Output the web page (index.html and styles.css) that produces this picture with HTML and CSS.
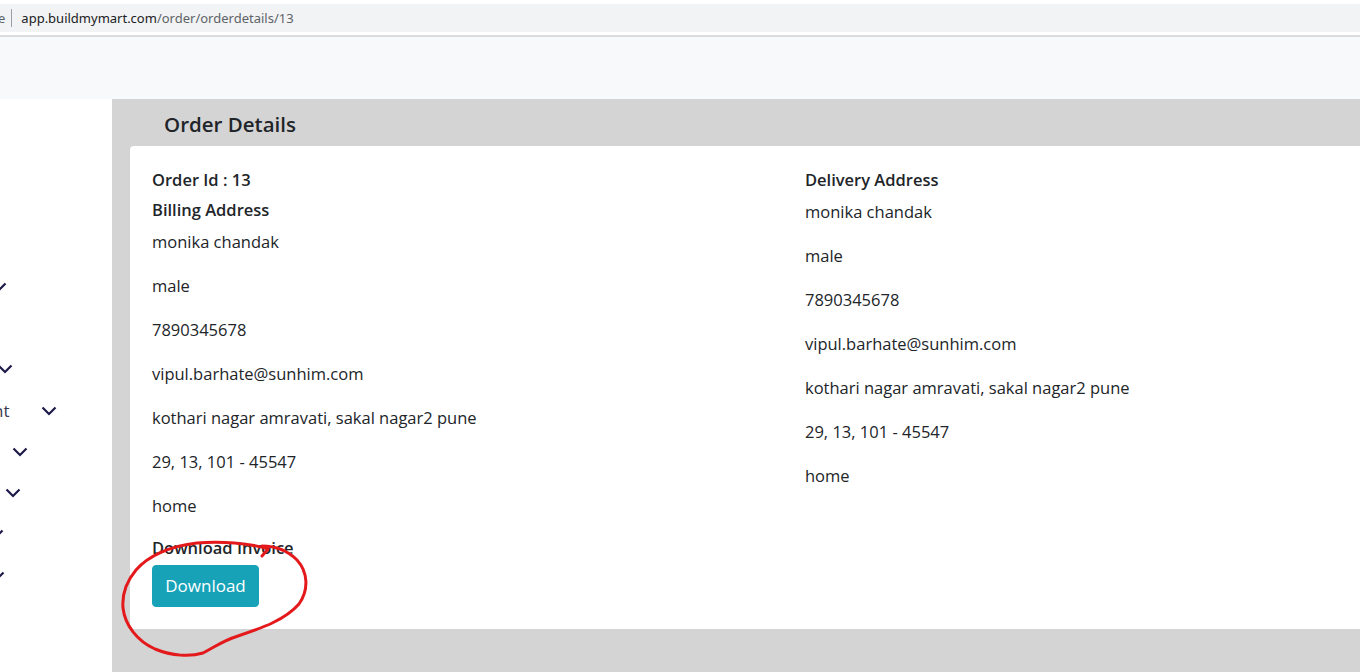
FILE: index.html
```html
<!DOCTYPE html>
<html lang="en">
<head>
    <meta charset="UTF-8">
    <meta name="viewport" content="width=device-width, initial-scale=1.0">
    <title>Order Details - BuildMyMart</title>
    <link rel="stylesheet" href="styles.css">
</head>

<body>
    <div class="browser-bar">
        <div class="url-box">
            <span class="url-tail">e</span>
            <span class="url-sep"></span>
            <span class="url-host">app.buildmymart.com</span><span class="url-path">/order/orderdetails/13</span>
        </div>
    </div>

    <nav class="topnav"></nav>

    <div class="layout">
        <aside class="sidebar">
            <ul class="side-menu">
                <li class="side-item"><svg class="caret c1" viewBox="0 0 16 10"><path d="M1.5 1.5 8 8l6.5-6.5"/></svg></li>
                <li class="side-item"></li>
                <li class="side-item"><svg class="caret c2" viewBox="0 0 16 10"><path d="M1.5 1.5 8 8l6.5-6.5"/></svg></li>
                <li class="side-item"><span class="side-label">nt</span><svg class="caret c3" viewBox="0 0 16 10"><path d="M1.5 1.5 8 8l6.5-6.5"/></svg></li>
                <li class="side-item"><svg class="caret c4" viewBox="0 0 16 10"><path d="M1.5 1.5 8 8l6.5-6.5"/></svg></li>
                <li class="side-item"><svg class="caret c5" viewBox="0 0 16 10"><path d="M1.5 1.5 8 8l6.5-6.5"/></svg></li>
                <li class="side-item"><svg class="caret c6" viewBox="0 0 16 10"><path d="M1.5 1.5 8 8l6.5-6.5"/></svg></li>
                <li class="side-item"><svg class="caret c7" viewBox="0 0 16 10"><path d="M1.5 1.5 8 8l6.5-6.5"/></svg></li>
            </ul>
        </aside>

        <main class="content">
            <h2 class="page-title">Order Details</h2>

            <div class="card">
                <div class="card-row">
                    <div class="card-col">
                        <h6>Order Id : 13</h6>
                        <h6>Billing Address</h6>
                        <p>monika chandak</p>
                        <p>male</p>
                        <p>7890345678</p>
                        <p>vipul.barhate@sunhim.com</p>
                        <p>kothari nagar amravati, sakal nagar2 pune</p>
                        <p>29, 13, 101 - 45547</p>
                        <p>home</p>
                        <h6>Download Invoice</h6>
                        <button class="btn-info">Download</button>
                    </div>
                    <div class="card-col">
                        <h6>Delivery Address</h6>
                        <p>monika chandak</p>
                        <p>male</p>
                        <p>7890345678</p>
                        <p>vipul.barhate@sunhim.com</p>
                        <p>kothari nagar amravati, sakal nagar2 pune</p>
                        <p>29, 13, 101 - 45547</p>
                        <p>home</p>
                    </div>
                </div>
            </div>
        </main>
    </div>

    <!-- pen mark around the download button -->
    <svg class="pen-mark" width="200" height="130" viewBox="115 535 200 130">
        <path d="M262 556 L268 549 C250 543 220 541 197 543 C170 546 148 556 136 570 C126 582 122 596 123 608 C125 625 137 641 155 649 C172 656 190 657 203 653 C215 647 222 641 238 636 C262 628 285 620 299 604 C309 590 308 572 297 560 C287 550 275 546 262 546"/>
    </svg>
</body>
</html>
```

FILE: styles.css
```css
html, body {
    margin: 0;
    padding: 0;
    height: 100%;
    overflow: hidden;
}

body {
    font-family: "Open Sans", "Noto Sans", Arial, sans-serif;
    color: #212529;
    background: #fff;
    position: relative;
}

/* address bar strip */
.browser-bar {
    height: 37px;
    padding-top: 4px;
    box-sizing: border-box;
    background: #fff;
    border-bottom: 2px solid #dadce0;
}

.url-box {
    height: 28px;
    background: #f1f3f4;
    display: flex;
    align-items: center;
    font-family: "Noto Sans", Arial, sans-serif;
    font-size: 13px;
    white-space: nowrap;
}

.url-tail {
    color: #5f6368;
    margin-left: -2px;
}

.url-sep {
    width: 1px;
    height: 18px;
    background: #9aa0a6;
    margin: 0 9px 0 6px;
}

.url-host {
    color: #202124;
}

.url-path {
    color: #5f6368;
}

.topnav {
    height: 62px;
    background: #f8f9fa;
}

.layout {
    display: flex;
    height: calc(100% - 99px);
}

/* left menu, scrolled sideways */
.sidebar {
    width: 112px;
    flex: none;
    background: #fff;
    overflow: hidden;
}

.side-menu {
    list-style: none;
    margin: 0;
    padding: 167px 0 0;
}

.side-item {
    height: 41.3px;
    display: flex;
    align-items: center;
}

.side-label {
    font-size: 17px;
    color: #3d3a4f;
    margin-left: -7px;
}

.caret {
    width: 16px;
    height: 10px;
    fill: none;
    stroke: #1c1a48;
    stroke-width: 2.2;
    flex: none;
}

.c1 { margin-left: -9px; }
.c2 { margin-left: -3px; }
.c3 { margin-left: 31px; }
.c4 { margin-left: 12px; }
.c5 { margin-left: 5px; }
.c6 { margin-left: -12px; }
.c7 { margin-left: -11px; }

/* main area */
.content {
    flex: 1;
    background: #d4d4d4;
    min-width: 0;
}

.page-title {
    margin: 0;
    height: 47px;
    line-height: 50px;
    padding-left: 52px;
    font-size: 20.5px;
    font-weight: 600;
}

.card {
    margin-left: 18px;
    width: 1350px;
    background: #fff;
    border-radius: 4px 0 0 4px;
    padding: 23px 22px 22px;
    box-sizing: border-box;
}

.card-row {
    display: grid;
    grid-template-columns: 653px 653px;
}

.card h6 {
    font-size: 16.5px;
    font-weight: 600;
    line-height: 21px;
    margin: 0 0 9px;
}

.card p {
    font-size: 16.5px;
    line-height: 26.4px;
    margin: 0 0 17.6px;
}

.btn-info {
    font-family: inherit;
    font-size: 17px;
    line-height: 26.4px;
    color: #fff;
    background: #17a2b8;
    border: 1px solid #17a2b8;
    border-radius: 4px;
    padding: 6.6px 10px;
    width: 107px;
    margin-top: -2px;
}

.pen-mark {
    position: absolute;
    left: 115px;
    top: 535px;
    fill: none;
    stroke: #e3191c;
    stroke-width: 3;
    stroke-linecap: round;
    stroke-linejoin: round;
}
```
